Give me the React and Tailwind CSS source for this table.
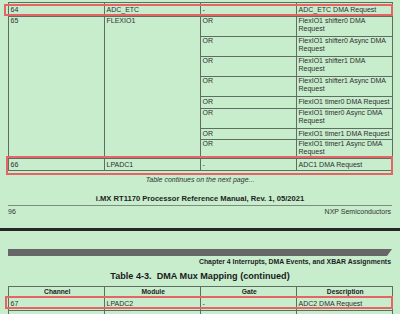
const B = "border-[#5e6e5f]";

function Cell({ children, className = "" }) {
  return (
    <div className={`w-[96px] shrink-0 border-r border-b ${B} pl-[1.5px] whitespace-nowrap ${className}`}>
      {children}
    </div>
  );
}

function SingleRow({ cells, h, className = "" }) {
  return (
    <div className={`flex ${h}`}>
      {cells.map((c, i) => (
        <Cell key={i} className={`flex items-center ${className}`}>
          {c}
        </Cell>
      ))}
    </div>
  );
}

const sub = [
  { lines: ["FlexIO1 shifter0 DMA", "Request"], h: "h-[20px]" },
  { lines: ["FlexIO1 shifter0 Async DMA", "Request"], h: "h-[20px]" },
  { lines: ["FlexIO1 shifter1 DMA", "Request"], h: "h-[20px]" },
  { lines: ["FlexIO1 shifter1 Async DMA", "Request"], h: "h-[20px]" },
  { lines: ["FlexIO1 timer0 DMA Request"], h: "h-[12px]", pt: "pt-[1px]" },
  { lines: ["FlexIO1 timer0 Async DMA", "Request"], h: "h-[20px]" },
  { lines: ["FlexIO1 timer1 DMA Request"], h: "h-[11px]", pt: "pt-[1px]" },
  { lines: ["FlexIO1 timer1 Async DMA", "Request"], h: "h-[19px]" },
];

export default function App() {
  return (
    <div className="relative w-[400px] h-[314px] overflow-hidden bg-[#c7edcc] font-['Liberation_Sans',Arial,sans-serif] text-[#303030] text-[7px] leading-[8px]">
      <div className="flex flex-col">
        {/* top table */}
        <div className={`mt-[2px] ml-[8px] w-[385px] border-l border-t ${B}`}>
          <SingleRow h="h-[14px]" cells={["64", "ADC_ETC", "-", "ADC_ETC DMA Request"]} />
          <div className="flex">
            <Cell>65</Cell>
            <Cell>FLEXIO1</Cell>
            <div className="flex flex-col">
              {sub.map((s, i) => (
                <div key={i} className={`flex ${s.h}`}>
                  <Cell className={s.pt || ""}>OR</Cell>
                  <Cell className={s.pt || ""}>
                    {s.lines.map((l, j) => (
                      <div key={j}>{l}</div>
                    ))}
                  </Cell>
                </div>
              ))}
            </div>
          </div>
          <SingleRow h="h-[12px]" cells={["66", "LPADC1", "-", "ADC1 DMA Request"]} />
        </div>

        <div className="h-[18px] leading-[18px] text-center italic text-[#333]">
          Table continues on the next page...
        </div>
        <div className="mt-[4px] h-[12px] leading-[12px] text-center font-bold text-[7.6px] text-[#1e1e1e]">
          i.MX RT1170 Processor Reference Manual, Rev. 1, 05/2021
        </div>
        <div className="ml-[8px] w-[384px] h-px bg-[#7d8c7e]"></div>
        <div className="ml-[8px] w-[383px] h-[12px] leading-[12px] flex justify-between text-[#333]">
          <span>96</span>
          <span>NXP Semiconductors</span>
        </div>

        <div className="mt-[10px] h-[3px] w-full bg-[#262626]"></div>

        <div className="mt-[18px] ml-[8px] w-[384px] h-[7px] bg-[#676767] [clip-path:polygon(0_0,100%_0,calc(100%_-_5px)_100%,0_100%)]"></div>
        <div className="ml-[8px] w-[383px] h-[12px] leading-[12px] text-right font-bold text-[6.9px] text-[#1e1e1e]">
          Chapter 4 Interrupts, DMA Events, and XBAR Assignments
        </div>
        <div className="h-[16px] leading-[16px] text-center font-bold text-[9.1px] text-[#1a1a1a] whitespace-pre">
          {"Table 4-3.  DMA Mux Mapping (continued)"}
        </div>

        {/* bottom table */}
        <div className={`mt-[2px] ml-[8px] w-[385px] border-l border-t ${B}`}>
          <div className="flex h-[11px]">
            {["Channel", "Module", "Gate", "Description"].map((t) => (
              <Cell key={t} className="flex items-center justify-center font-bold text-[6.7px] text-[#222] pl-0">
                {t}
              </Cell>
            ))}
          </div>
          <SingleRow h="h-[13px]" cells={["67", "LPADC2", "-", "ADC2 DMA Request"]} />
          <SingleRow h="h-[20px]" cells={["", "", "", ""]} />
        </div>
      </div>

      {/* highlight boxes */}
      <div className="absolute left-[4px] top-[4px] w-[389px] h-[12px] border-2 border-[#e66466]"></div>
      <div className="absolute left-[6px] top-[156px] w-[387px] h-[19px] border-2 border-[#e66466]"></div>
      <div className="absolute left-[5px] top-[296px] w-[388px] h-[13px] border-2 border-[#e66466]"></div>
    </div>
  );
}
